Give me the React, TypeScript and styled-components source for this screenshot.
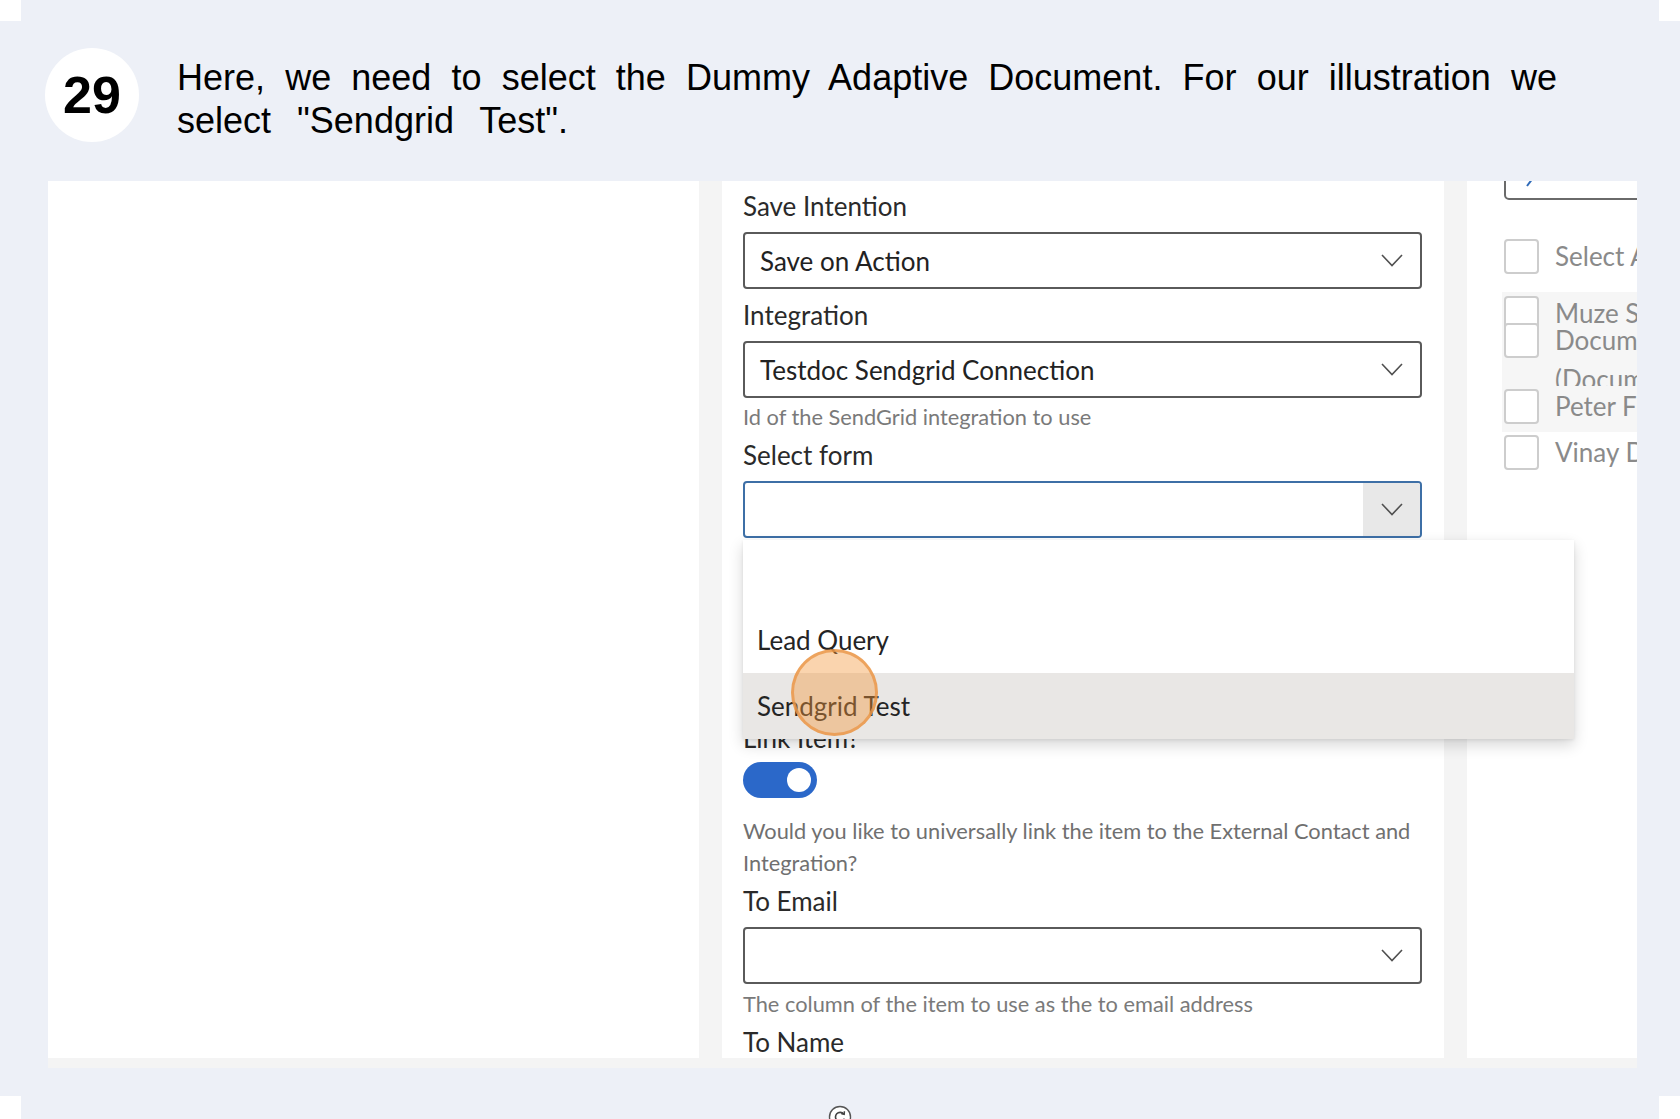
import * as React from "react";
import styled, { createGlobalStyle } from "styled-components";

const GlobalStyle = createGlobalStyle`
  html, body {
    margin: 0;
    padding: 0;
    background: #ffffff;
  }
  body {
    font-family: "Liberation Sans", Arial, sans-serif;
  }
  * {
    box-sizing: border-box;
  }
`;

const Page = styled.div`
  width: 1680px;
  height: 1119px;
  overflow: hidden;
  display: flex;
  flex-direction: column;
`;

const EdgeStrip = styled.div<{ $h: number }>`
  height: ${(p) => p.$h}px;
  flex-shrink: 0;
  margin: 0 21px;
  background: #edf0f7;
  display: flex;
  justify-content: center;
  align-items: flex-start;
  padding-top: 9px;
  overflow: hidden;
`;

const StepCard = styled.section`
  background: #edf0f7;
  padding: 27px 43px 28px 45px;
  flex-shrink: 0;
`;

const Header = styled.div`
  display: flex;
  align-items: flex-start;
  gap: 38px;
`;

const Badge = styled.div`
  width: 94px;
  height: 94px;
  flex-shrink: 0;
  border-radius: 50%;
  background: #ffffff;
  display: flex;
  align-items: center;
  justify-content: center;
  font-family: "Liberation Sans", Arial, sans-serif;
  font-weight: 700;
  font-size: 52px;
  color: #000000;
`;

const Instruction = styled.div`
  width: 1380px;
  margin-top: 8px;
  font-family: "Liberation Sans", Arial, sans-serif;
  font-size: 36px;
  line-height: 43px;
  color: #000000;
`;

const JustLine = styled.span`
  display: block;
  text-align: justify;
  text-align-last: justify;
`;

const TailLine = styled.span`
  display: block;
  word-spacing: 16px;
`;

const Shot = styled.div`
  margin: 39px 0 0 3px;
  width: 1589px;
  height: 887px;
  background: #f4f4f4;
  display: flex;
  gap: 23px;
  padding-bottom: 10px;
  overflow: hidden;
  font-family: "Lato", "Open Sans", sans-serif;
`;

const BlankColumn = styled.div`
  width: 651px;
  flex-shrink: 0;
  background: #ffffff;
`;

const FormColumn = styled.div`
  width: 722px;
  flex-shrink: 0;
  background: #ffffff;
  padding: 10px 22px 0 21px;
  position: relative;
  z-index: 2;
`;

const SideColumn = styled.div`
  flex: 1;
  background: #ffffff;
  padding-left: 37px;
  overflow: hidden;
  position: relative;
  z-index: 1;
`;

const Label = styled.div<{ $mt?: number }>`
  margin-top: ${(p) => p.$mt ?? 0}px;
  font-size: 26px;
  line-height: 30px;
  color: #2a2a2a;
  white-space: nowrap;
`;

const Hint = styled.div<{ $mt?: number }>`
  margin-top: ${(p) => p.$mt ?? 0}px;
  font-size: 21.8px;
  line-height: 28px;
  color: #7a7a7a;
`;

const Para = styled.div<{ $mt?: number }>`
  margin-top: ${(p) => p.$mt ?? 0}px;
  font-size: 21.8px;
  line-height: 31.5px;
  color: #707070;
`;

const SelectWrap = styled.div<{ $mt?: number }>`
  position: relative;
  margin-top: ${(p) => p.$mt ?? 0}px;
`;

const SelectBox = styled.div<{ $focused?: boolean }>`
  height: 57px;
  display: flex;
  align-items: stretch;
  background: #ffffff;
  border: 2px solid ${(p) => (p.$focused ? "#3d6fa6" : "#5a5a5a")};
  border-radius: 4px;
  overflow: hidden;
`;

const SelectValue = styled.div`
  flex: 1;
  display: flex;
  align-items: center;
  padding-left: 15px;
  font-size: 26px;
  line-height: 30px;
  color: #222222;
`;

const ArrowCell = styled.div<{ $focused?: boolean }>`
  width: 57px;
  display: flex;
  align-items: center;
  justify-content: center;
  background: ${(p) => (p.$focused ? "#e8e8e8" : "transparent")};
`;

const Menu = styled.div`
  position: absolute;
  top: calc(100% + 2px);
  left: 0;
  width: 831px;
  background: #ffffff;
  box-shadow: 0 6px 14px rgba(0, 0, 0, 0.16), 0 1px 3px rgba(0, 0, 0, 0.08);
  z-index: 5;
`;

const Option = styled.div<{ $active?: boolean; $h: number }>`
  height: ${(p) => p.$h}px;
  display: flex;
  align-items: center;
  padding-left: 14px;
  font-size: 26px;
  color: #242424;
  background: ${(p) => (p.$active ? "#e9e7e5" : "#ffffff")};
`;

const ClickMark = styled.div`
  position: absolute;
  left: 48px;
  top: 109px;
  width: 87px;
  height: 87px;
  border-radius: 50%;
  background: rgba(242, 152, 62, 0.42);
  border: 3px solid rgba(234, 150, 72, 0.8);
  pointer-events: none;
`;

const Toggle = styled.div<{ $mt?: number }>`
  margin-top: ${(p) => p.$mt ?? 0}px;
  width: 74px;
  height: 36px;
  border-radius: 18px;
  background: #2b68c9;
  display: flex;
  align-items: center;
  justify-content: flex-end;
  padding-right: 6px;
`;

const Knob = styled.div`
  width: 24px;
  height: 24px;
  border-radius: 50%;
  background: #ffffff;
`;

const SearchBox = styled.div`
  margin-top: -33px;
  width: 220px;
  height: 52px;
  border: 2px solid #6a6a6a;
  border-radius: 5px;
  display: flex;
  align-items: flex-end;
  gap: 22px;
  padding: 0 0 11px 20px;
  font-size: 26px;
  color: #9a9a9a;
  line-height: 24px;
`;

const SearchText = styled.span`
  transform: translateY(-20px);
`;

const CheckRow = styled.div<{ $mt?: number; $shade?: boolean }>`
  margin-top: ${(p) => p.$mt ?? 0}px;
  margin-left: -2px;
  padding-left: 2px;
  display: flex;
  align-items: flex-start;
  gap: 16px;
  background: ${(p) => (p.$shade ? "#f6f6f6" : "transparent")};
  padding-top: 3px;
  height: 46px;
  white-space: nowrap;
`;

const StackRow = styled(CheckRow)`
  height: 94px;
  padding-top: 4px;
  overflow: hidden;
`;

const CheckStack = styled.div`
  display: flex;
  flex-direction: column;
  & > div + div {
    margin-top: -8px;
  }
`;

const Checkbox = styled.div`
  width: 35px;
  height: 35px;
  flex-shrink: 0;
  border: 2px solid #cdcdcd;
  border-radius: 4px;
  background: #ffffff;
`;

const ItemText = styled.div`
  font-size: 26px;
  line-height: 35px;
  color: #8a8a8a;
`;

const ItemLines = styled.div`
  font-size: 26px;
  line-height: 27px;
  color: #8a8a8a;
  padding-top: 4px;
  & > span {
    display: block;
  }
  & > span:last-child {
    margin-top: 12px;
  }
`;

const Chevron = () => (
  <svg width="22" height="13" viewBox="0 0 22 13">
    <polyline
      points="1,1 11,11.5 21,1"
      fill="none"
      stroke="#505050"
      strokeWidth="1.6"
    />
  </svg>
);

const RefreshIcon = () => (
  <svg width="24" height="24" viewBox="0 0 24 24">
    <circle cx="12" cy="12" r="10.5" fill="#ffffff" stroke="#555" strokeWidth="1.4" />
    <path
      d="M15.8 9.2 A4.6 4.6 0 1 0 16.4 13.6"
      fill="none"
      stroke="#444"
      strokeWidth="1.6"
    />
    <polyline points="13.2,8.6 16.2,9.4 16.4,6.3" fill="none" stroke="#444" strokeWidth="1.5" />
  </svg>
);

const Select = ({
  value,
  focused,
  mt,
  children,
}: {
  value?: string;
  focused?: boolean;
  mt?: number;
  children?: React.ReactNode;
}) => (
  <SelectWrap $mt={mt}>
    <SelectBox $focused={focused}>
      <SelectValue>{value}</SelectValue>
      <ArrowCell $focused={focused}>
        <Chevron />
      </ArrowCell>
    </SelectBox>
    {children}
  </SelectWrap>
);

export default function App() {
  return (
    <Page>
      <GlobalStyle />
      <EdgeStrip $h={21} />
      <StepCard>
        <Header>
          <Badge>29</Badge>
          <Instruction>
            <JustLine>
              Here, we need to select the Dummy Adaptive Document. For our
              illustration we
            </JustLine>
            <TailLine>select "Sendgrid Test".</TailLine>
          </Instruction>
        </Header>
        <Shot>
          <BlankColumn />
          <FormColumn>
            <Label>Save Intention</Label>
            <Select mt={11} value="Save on Action" />
            <Label $mt={11}>Integration</Label>
            <Select mt={11} value="Testdoc Sendgrid Connection" />
            <Hint $mt={5}>Id of the SendGrid integration to use</Hint>
            <Label $mt={9}>Select form</Label>
            <Select mt={11} focused>
              <Menu>
                <Option $h={66} />
                <Option $h={67}>Lead Query</Option>
                <Option $h={66} $active>
                  Sendgrid Test
                </Option>
                <ClickMark />
              </Menu>
            </Select>
            <Label $mt={185}>Link Item?</Label>
            <Toggle $mt={9}>
              <Knob />
            </Toggle>
            <Para $mt={17}>
              Would you like to universally link the item to the External
              Contact and Integration?
            </Para>
            <Label $mt={8}>To Email</Label>
            <Select mt={11} />
            <Hint $mt={6}>The column of the item to use as the to email address</Hint>
            <Label $mt={9}>To Name</Label>
          </FormColumn>
          <SideColumn>
            <SearchBox>
              <svg width="8" height="10" viewBox="0 0 8 10">
                <line x1="1" y1="9" x2="7" y2="1" stroke="#2f6ab8" strokeWidth="2" />
              </svg>
              <SearchText>Search</SearchText>
            </SearchBox>
            <CheckRow $mt={36}>
              <Checkbox />
              <ItemText>Select All</ItemText>
            </CheckRow>
            <StackRow $mt={10} $shade>
              <CheckStack>
                <Checkbox />
                <Checkbox />
              </CheckStack>
              <ItemLines>
                <span>Muze Sample</span>
                <span>Document</span>
                <span>(Document)</span>
              </ItemLines>
            </StackRow>
            <CheckRow $shade>
              <Checkbox />
              <ItemText>Peter Fisher</ItemText>
            </CheckRow>
            <CheckRow>
              <Checkbox />
              <ItemText>Vinay Dev</ItemText>
            </CheckRow>
          </SideColumn>
        </Shot>
      </StepCard>
      <EdgeStrip $h={23}>
        <RefreshIcon />
      </EdgeStrip>
    </Page>
  );
}
